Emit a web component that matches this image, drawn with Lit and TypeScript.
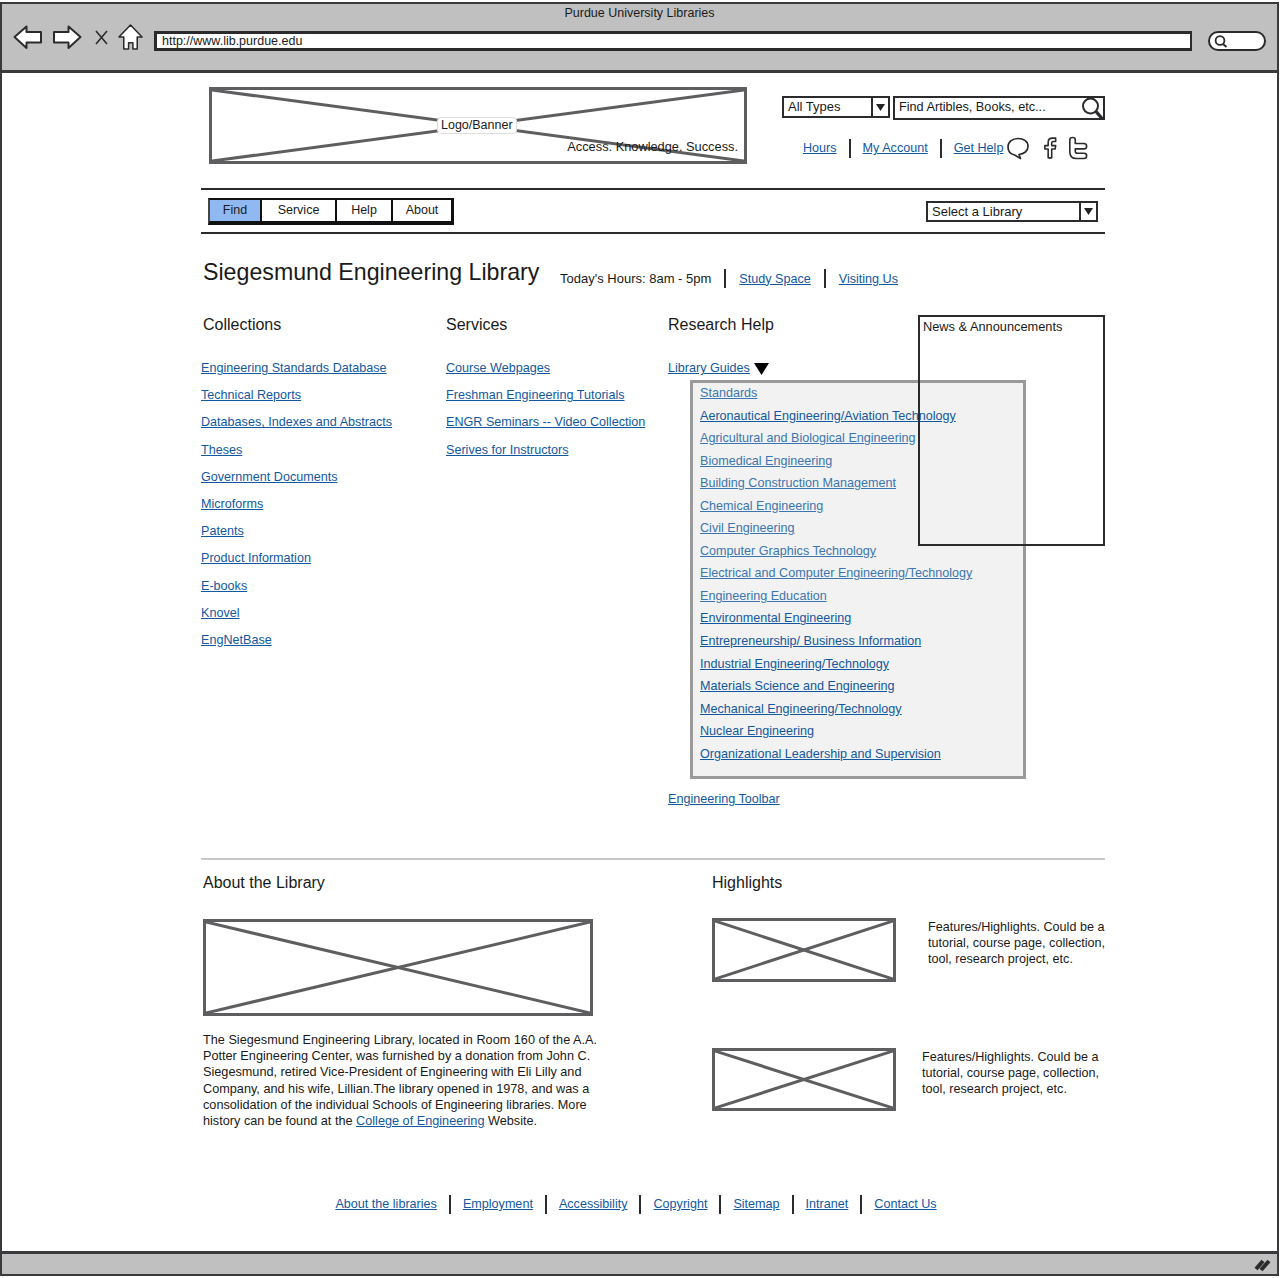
import { LitElement, html, css } from 'lit';
import { customElement, property } from 'lit/decorators.js';

const COLLECTIONS = [
  'Engineering Standards Database', 'Technical Reports', 'Databases, Indexes and Abstracts', 'Theses',
  'Government Documents', 'Microforms', 'Patents', 'Product Information', 'E-books', 'Knovel', 'EngNetBase',
];
const SERVICES = ['Course Webpages', 'Freshman Engineering Tutorials', 'ENGR Seminars -- Video Collection', 'Serives for Instructors'];
const GUIDES: [string, boolean][] = [
  ['Standards', true],
  ['Aeronautical Engineering/Aviation Technology', false],
  ['Agricultural and Biological Engineering', true],
  ['Biomedical Engineering', true],
  ['Building Construction Management', true],
  ['Chemical Engineering', true],
  ['Civil Engineering', true],
  ['Computer Graphics Technology', true],
  ['Electrical and Computer Engineering/Technology', true],
  ['Engineering Education', true],
  ['Environmental Engineering', false],
  ['Entrepreneurship/ Business Information', false],
  ['Industrial Engineering/Technology', false],
  ['Materials Science and Engineering', false],
  ['Mechanical Engineering/Technology', false],
  ['Nuclear Engineering', false],
  ['Organizational Leadership and Supervision', false],
];
const FOOTER = ['About the libraries', 'Employment', 'Accessibility', 'Copyright', 'Sitemap', 'Intranet', 'Contact Us'];

// crossed box used for every image placeholder
@customElement('x-box')
export class XBox extends LitElement {
  static styles = css`
    :host { display: block; position: relative; box-sizing: border-box; border: 3px solid #5e5e60; }
    svg { display: block; width: 100%; height: 100%; }
    line { stroke: #5e5e60; stroke-width: 3; vector-effect: non-scaling-stroke; }
  `;
  render() {
    return html`<svg viewBox="0 0 100 100" preserveAspectRatio="none">
      <line x1="0" y1="0" x2="100" y2="100"></line>
      <line x1="0" y1="100" x2="100" y2="0"></line>
    </svg><slot></slot>`;
  }
}

@customElement('sk-select')
export class SkSelect extends LitElement {
  @property() label = '';
  static styles = css`
    :host { display: flex; box-sizing: border-box; border: 2px solid #2b2b2d; background: #fff; align-items: center; }
    .label { flex: 1; padding: 0 0 1px 4px; font-size: 13px; color: #1a1a1a; }
    .btn { width: 15px; align-self: stretch; border-left: 2px solid #2b2b2d; display: flex; align-items: center; justify-content: center; }
    .btn svg { width: 9px; height: 7px; }
  `;
  render() {
    return html`<span class="label">${this.label}</span>
      <span class="btn"><svg viewBox="0 0 9 7"><path d="M0 0H9L4.5 7Z" fill="#222"></path></svg></span>`;
  }
}

@customElement('app-root')
export class AppRoot extends LitElement {
  static styles = css`
    :host {
      display: block; width: 1280px; height: 1278px; overflow: hidden; background: #fff;
      font-family: "Liberation Sans", Arial, sans-serif; font-size: 13px; color: #1a1a1a;
    }
    a { color: #12589f; text-decoration: underline; font-size: 12.6px; }
    .frame {
      box-sizing: border-box; height: 1274px; margin-top: 2px; width: 1279px;
      border: 2px solid #3a3a3c; display: flex; flex-direction: column;
    }
    .chrome {
      height: 66px; flex: none; background: #c0c0c0; border-bottom: 3px solid #3a3a3c;
      display: flex; flex-direction: column; align-items: stretch;
    }
    .chrome-title { text-align: center; font-size: 12.5px; line-height: 16px; margin-top: 1px; }
    .toolbar { display: flex; align-items: center; margin-top: 3px; padding-left: 11px; height: 26px; }
    .toolbar svg { display: block; flex: none; }
    .fwd { margin-left: 9px; }
    .stop { margin-left: 13px; }
    .home { margin-left: 10px; }
    .url {
      box-sizing: border-box; width: 1038px; height: 20px; margin: 8px 0 0 11px; background: #fff;
      border: 3px solid #2b2b2d; border-right-width: 2px; font-size: 12.5px; line-height: 14px; padding-left: 5px;
    }
    .pill {
      box-sizing: border-box; width: 58px; height: 20px; margin: 7px 0 0 16px; background: #fff;
      border: 2px solid #2b2b2d; border-radius: 10px; display: flex; align-items: center; padding-left: 2px;
    }
    .page { flex: 1; padding-left: 199px; width: 904px; display: flex; flex-direction: column; }

    .masthead { display: flex; height: 115px; padding-top: 14px; box-sizing: border-box; }
    .logo { width: 539px; height: 77px; margin-left: 8px; }
    .logo-tag {
      position: absolute; left: 225px; top: 27px; background: #fff; border: 1px solid #ddd; border-radius: 4px;
      padding: 0 3px; line-height: 15px; font-size: 12.5px;
    }
    .slogan { position: absolute; right: 6px; top: 49px; font-size: 12.8px; line-height: 16px; }
    .mast-right { margin-left: 35px; width: 323px; }
    .search-row { display: flex; gap: 3px; margin-top: 9px; }
    .types { width: 108px; height: 22px; }
    .search {
      box-sizing: border-box; width: 212px; height: 24px; border: 2px solid #2b2b2d; display: flex;
      align-items: center; padding-left: 4px; font-size: 12.7px;
    }
    .search span { flex: 1; padding-bottom: 2px; }
    .search svg { margin-right: -1px; margin-top: 1px; }
    .util { display: flex; align-items: center; margin: 15px 0 0 21px; height: 26px; }
    .util .sep { margin: 0 12px; }
    .util svg { display: block; flex: none; }
    .sep { display: inline-block; width: 2px; height: 19px; background: #2b2b2d; flex: none; }

    .navbar {
      box-sizing: border-box; height: 46px; border-top: 2px solid #2b2b2d; border-bottom: 2px solid #2b2b2d;
      display: flex; align-items: center; justify-content: space-between; padding: 0 7px;
    }
    .tabs {
      display: flex; border: 2px solid #111; border-bottom-width: 4px; border-right-width: 3px; height: 27px;
      box-sizing: border-box; margin-top: 1px; border-left-color: #444;
    }
    .tab { display: flex; align-items: center; justify-content: center; font-size: 12.5px; border-left: 2px solid #111; box-sizing: border-box; padding-bottom: 1px; }
    .tab:first-child { border-left: 0; background: #90b9f2; width: 50px; }
    .library { width: 172px; height: 21px; margin-top: 1px; }

    .title-row { display: flex; align-items: flex-start; margin-top: 23px; padding-left: 2px; height: 31px; }
    h1 { margin: 0; font-size: 23.2px; font-weight: 400; line-height: 31px; width: 357px; }
    .hours { display: flex; align-items: center; margin-top: 12px; }
    .hours .sep { margin: 0 13px; }

    h2 { margin: 0; font-size: 16px; font-weight: 400; line-height: 20px; padding-left: 2px; }
    .cols { display: grid; grid-template-columns: 245px 222px 250px 186px; margin-top: 27px; height: 543px; }
    .col { display: flex; flex-direction: column; align-items: flex-start; }
    .stack { display: flex; flex-direction: column; gap: 12.2px; margin-top: 26px; }
    .stack a { line-height: 15px; }
    .guide-head { display: flex; align-items: center; gap: 4px; margin-top: 26px; line-height: 15px; }
    .panel {
      box-sizing: border-box; width: 336px; height: 399px; margin: 4px 0 0 22px; flex: none; padding: 3px 0 0 7px;
      background: #f2f2f2; border: 3px solid #9a9a9a; display: flex; flex-direction: column; align-items: flex-start;
      gap: 7.55px; white-space: nowrap;
    }
    .panel a { line-height: 15px; }
    .panel a.soft { color: #3c76b0; }
    .toolbar-link { margin-top: 13px; line-height: 15px; }
    .news {
      position: relative; z-index: 2; box-sizing: border-box; width: 187px; height: 231px; margin-top: 0;
      border: 2px solid #2b2b2d; padding: 2px 3px; line-height: 15px; font-size: 12.8px;
    }

    .divider { height: 2px; background: #c8c8c8; flex: none; }
    .lower { display: grid; grid-template-columns: 511px 393px; margin-top: 13px; }
    .about-img { width: 390px; height: 97px; margin: 26px 0 0 2px; }
    .about p { margin: 16px 0 0 2px; line-height: 16.2px; white-space: nowrap; font-size: 12.7px; }
    .about p a { font-size: inherit; }
    .feature { display: flex; }
    .highlights { display: flex; flex-direction: column; }
    .hl-head { margin-bottom: 25px; }
    .hl-head h2 { padding-left: 0; }
    .f1 { height: 130px; }
    .thumb { width: 184px; flex: none; }
    .f1 .thumb { height: 64px; }
    .f2 .thumb { height: 63px; }
    .feature p { line-height: 16px; white-space: nowrap; font-size: 12.6px; }
    .f1 p { margin: 1px 0 0 32px; }
    .f2 p { margin: 1px 0 0 26px; }

    .footer { display: flex; justify-content: center; align-items: center; margin-top: 63px; padding-right: 34px; height: 24px; }
    .footer .sep { margin: 0 12px; }

    .status { flex: none; height: 23px; margin-top: auto; background: #c0c0c0; border-top: 3px solid #3a3a3c; display: flex; align-items: center; justify-content: flex-end; padding-right: 5px; box-sizing: border-box; }
  `;

  private arrow(flip: boolean) {
    return html`<svg width="30" height="26" viewBox="0 0 30 26" style=${flip ? 'transform:scaleX(-1)' : ''}>
      <path d="M1.5 13 L13.5 2.5 V8 H28 V18.5 H13.5 V24 Z" fill="#fff" stroke="#2b2b2d" stroke-width="2" stroke-linejoin="round"></path>
    </svg>`;
  }

  private sep() {
    return html`<span class="sep"></span>`;
  }

  render() {
    return html`
      <div class="frame">
        <div class="chrome">
          <div class="chrome-title">Purdue University Libraries</div>
          <div class="toolbar">
            ${this.arrow(false)}
            <span class="fwd">${this.arrow(true)}</span>
            <svg class="stop" width="13" height="15" viewBox="0 0 13 15"><path d="M1 1L12 14M12 1L1 14" stroke="#2b2b2d" stroke-width="1.6" fill="none"></path></svg>
            <svg class="home" width="25" height="28" viewBox="0 0 26 28">
              <path d="M1 14 L13 1.500 L25 14 H20 V26.500 H15.500 V20 H11 V26.500 H6 V14 Z" fill="#fff" stroke="#2b2b2d" stroke-width="1.600" stroke-linejoin="round"></path>
            </svg>
            <div class="url">http://www.lib.purdue.edu</div>
            <div class="pill">
              <svg width="16" height="14" viewBox="0 0 16 14"><circle cx="8" cy="6.500" r="4.400" fill="none" stroke="#2b2b2d" stroke-width="1.800"></circle><path d="M11 10l3.500 3" stroke="#2b2b2d" stroke-width="2"></path></svg>
            </div>
          </div>
        </div>

        <div class="page">
          <div class="masthead">
            <x-box class="logo">
              <span class="logo-tag">Logo/Banner</span>
              <span class="slogan">Access. Knowledge. Success.</span>
            </x-box>
            <div class="mast-right">
              <div class="search-row">
                <sk-select class="types" label="All Types"></sk-select>
                <div class="search">
                  <span>Find Artibles, Books, etc...</span>
                  <svg width="23" height="23" viewBox="0 0 23 23">
                    <circle cx="9.500" cy="9" r="7.500" fill="#fff" stroke="#2b2b2d" stroke-width="2"></circle>
                    <path d="M15 14.500L21 21.500" stroke="#2b2b2d" stroke-width="3.400"></path>
                  </svg>
                </div>
              </div>
              <div class="util">
                <a href="#">Hours</a>${this.sep()}
                <a href="#">My Account</a>${this.sep()}
                <a href="#">Get Help</a>
                <svg width="24" height="24" viewBox="0 0 24 24" style="margin-left:3px">
                  <path d="M12 2.500C6 2.500 2 6 2 11c0 4 2.500 7 6.500 8l6 3.500-1.500-4c5-.5 9-3.500 9-8C22 5.500 18 2.500 12 2.500Z" fill="#fff" stroke="#2b2b2d" stroke-width="1.700" stroke-linejoin="round"></path>
                </svg>
                <svg width="15" height="24" viewBox="0 0 16 24" style="margin-left:13px">
                  <path d="M5.500 22.500V13H2V9.500H5.500V6C5.500 3 7.500 1.500 10 1.500H13.500V5H11C9.800 5 9.300 5.500 9.300 6.500V9.500H13.500L13 13H9.300V22.500Z" fill="#fff" stroke="#2b2b2d" stroke-width="1.700" stroke-linejoin="round"></path>
                </svg>
                <svg width="20" height="24" viewBox="0 0 22 26" style="margin-left:10px">
                  <path d="M2 4C2 2 3.500 1.500 5 1.500S8 2.500 8 4V8H17.500C19.500 8 20.500 9.200 20.500 11S19.500 14 17.500 14H8V16.500C8 18 9 18.800 10.500 18.800H17.500C19.500 18.800 20.500 20 20.500 21.500S19.500 24.500 17.500 24.500H9C4.500 24.500 2 22 2 17.500Z" fill="#fff" stroke="#2b2b2d" stroke-width="1.800" stroke-linejoin="round"></path>
                </svg>
              </div>
            </div>
          </div>

          <div class="navbar">
            <div class="tabs">
              <div class="tab">Find</div>
              <div class="tab" style="width:75px">Service</div>
              <div class="tab" style="width:56px">Help</div>
              <div class="tab" style="width:60px">About</div>
            </div>
            <sk-select class="library" label="Select a Library"></sk-select>
          </div>

          <div class="title-row">
            <h1>Siegesmund Engineering Library</h1>
            <div class="hours">
              <span>Today's Hours: 8am - 5pm</span>${this.sep()}
              <a href="#">Study Space</a>${this.sep()}
              <a href="#">Visiting Us</a>
            </div>
          </div>

          <div class="cols">
            <div class="col">
              <h2>Collections</h2>
              <div class="stack">${COLLECTIONS.map((c) => html`<a href="#">${c}</a>`)}</div>
            </div>
            <div class="col">
              <h2 style="padding-left:0">Services</h2>
              <div class="stack">${SERVICES.map((c) => html`<a href="#">${c}</a>`)}</div>
            </div>
            <div class="col">
              <h2 style="padding-left:0">Research Help</h2>
              <div class="guide-head">
                <a href="#">Library Guides</a>
                <svg width="15" height="12" viewBox="0 0 15 12"><path d="M0 0H15L7.500 12Z" fill="#000"></path></svg>
              </div>
              <div class="panel">
                ${GUIDES.map(([name, soft]) => html`<a href="#" class=${soft ? 'soft' : ''}>${name}</a>`)}
              </div>
              <a class="toolbar-link" href="#">Engineering Toolbar</a>
            </div>
            <div class="news">News &amp; Announcements</div>
          </div>

          <div class="divider"></div>

          <div class="lower">
            <div class="about">
              <h2>About the Library</h2>
              <x-box class="about-img"></x-box>
              <p>The Siegesmund Engineering Library, located in Room 160 of the A.A.<br>
              Potter Engineering Center, was furnished by a donation from John C.<br>
              Siegesmund, retired Vice-President of Engineering with Eli Lilly and<br>
              Company, and his wife, Lillian.The library opened in 1978, and was a<br>
              consolidation of the individual Schools of Engineering libraries. More<br>
              history can be found at the <a href="#">College of Engineering</a> Website.</p>
            </div>
            <div class="highlights">
              <div class="hl-head"><h2>Highlights</h2></div>
              <div class="feature f1">
                <x-box class="thumb"></x-box>
                <p>Features/Highlights. Could be a<br>tutorial, course page, collection,<br>tool, research project, etc.</p>
              </div>
              <div class="feature f2">
                <x-box class="thumb"></x-box>
                <p>Features/Highlights. Could be a<br>tutorial, course page, collection,<br>tool, research project, etc.</p>
              </div>
            </div>
          </div>

          <div class="footer">
            ${FOOTER.map((f, i) => html`${i ? this.sep() : ''}<a href="#">${f}</a>`)}
          </div>
        </div>

        <div class="status">
          <svg width="18" height="16" viewBox="0 0 18 16"><path d="M2 13L9 5M7 14L15 5" stroke="#2b2b2d" stroke-width="4"></path></svg>
        </div>
      </div>
    `;
  }
}
